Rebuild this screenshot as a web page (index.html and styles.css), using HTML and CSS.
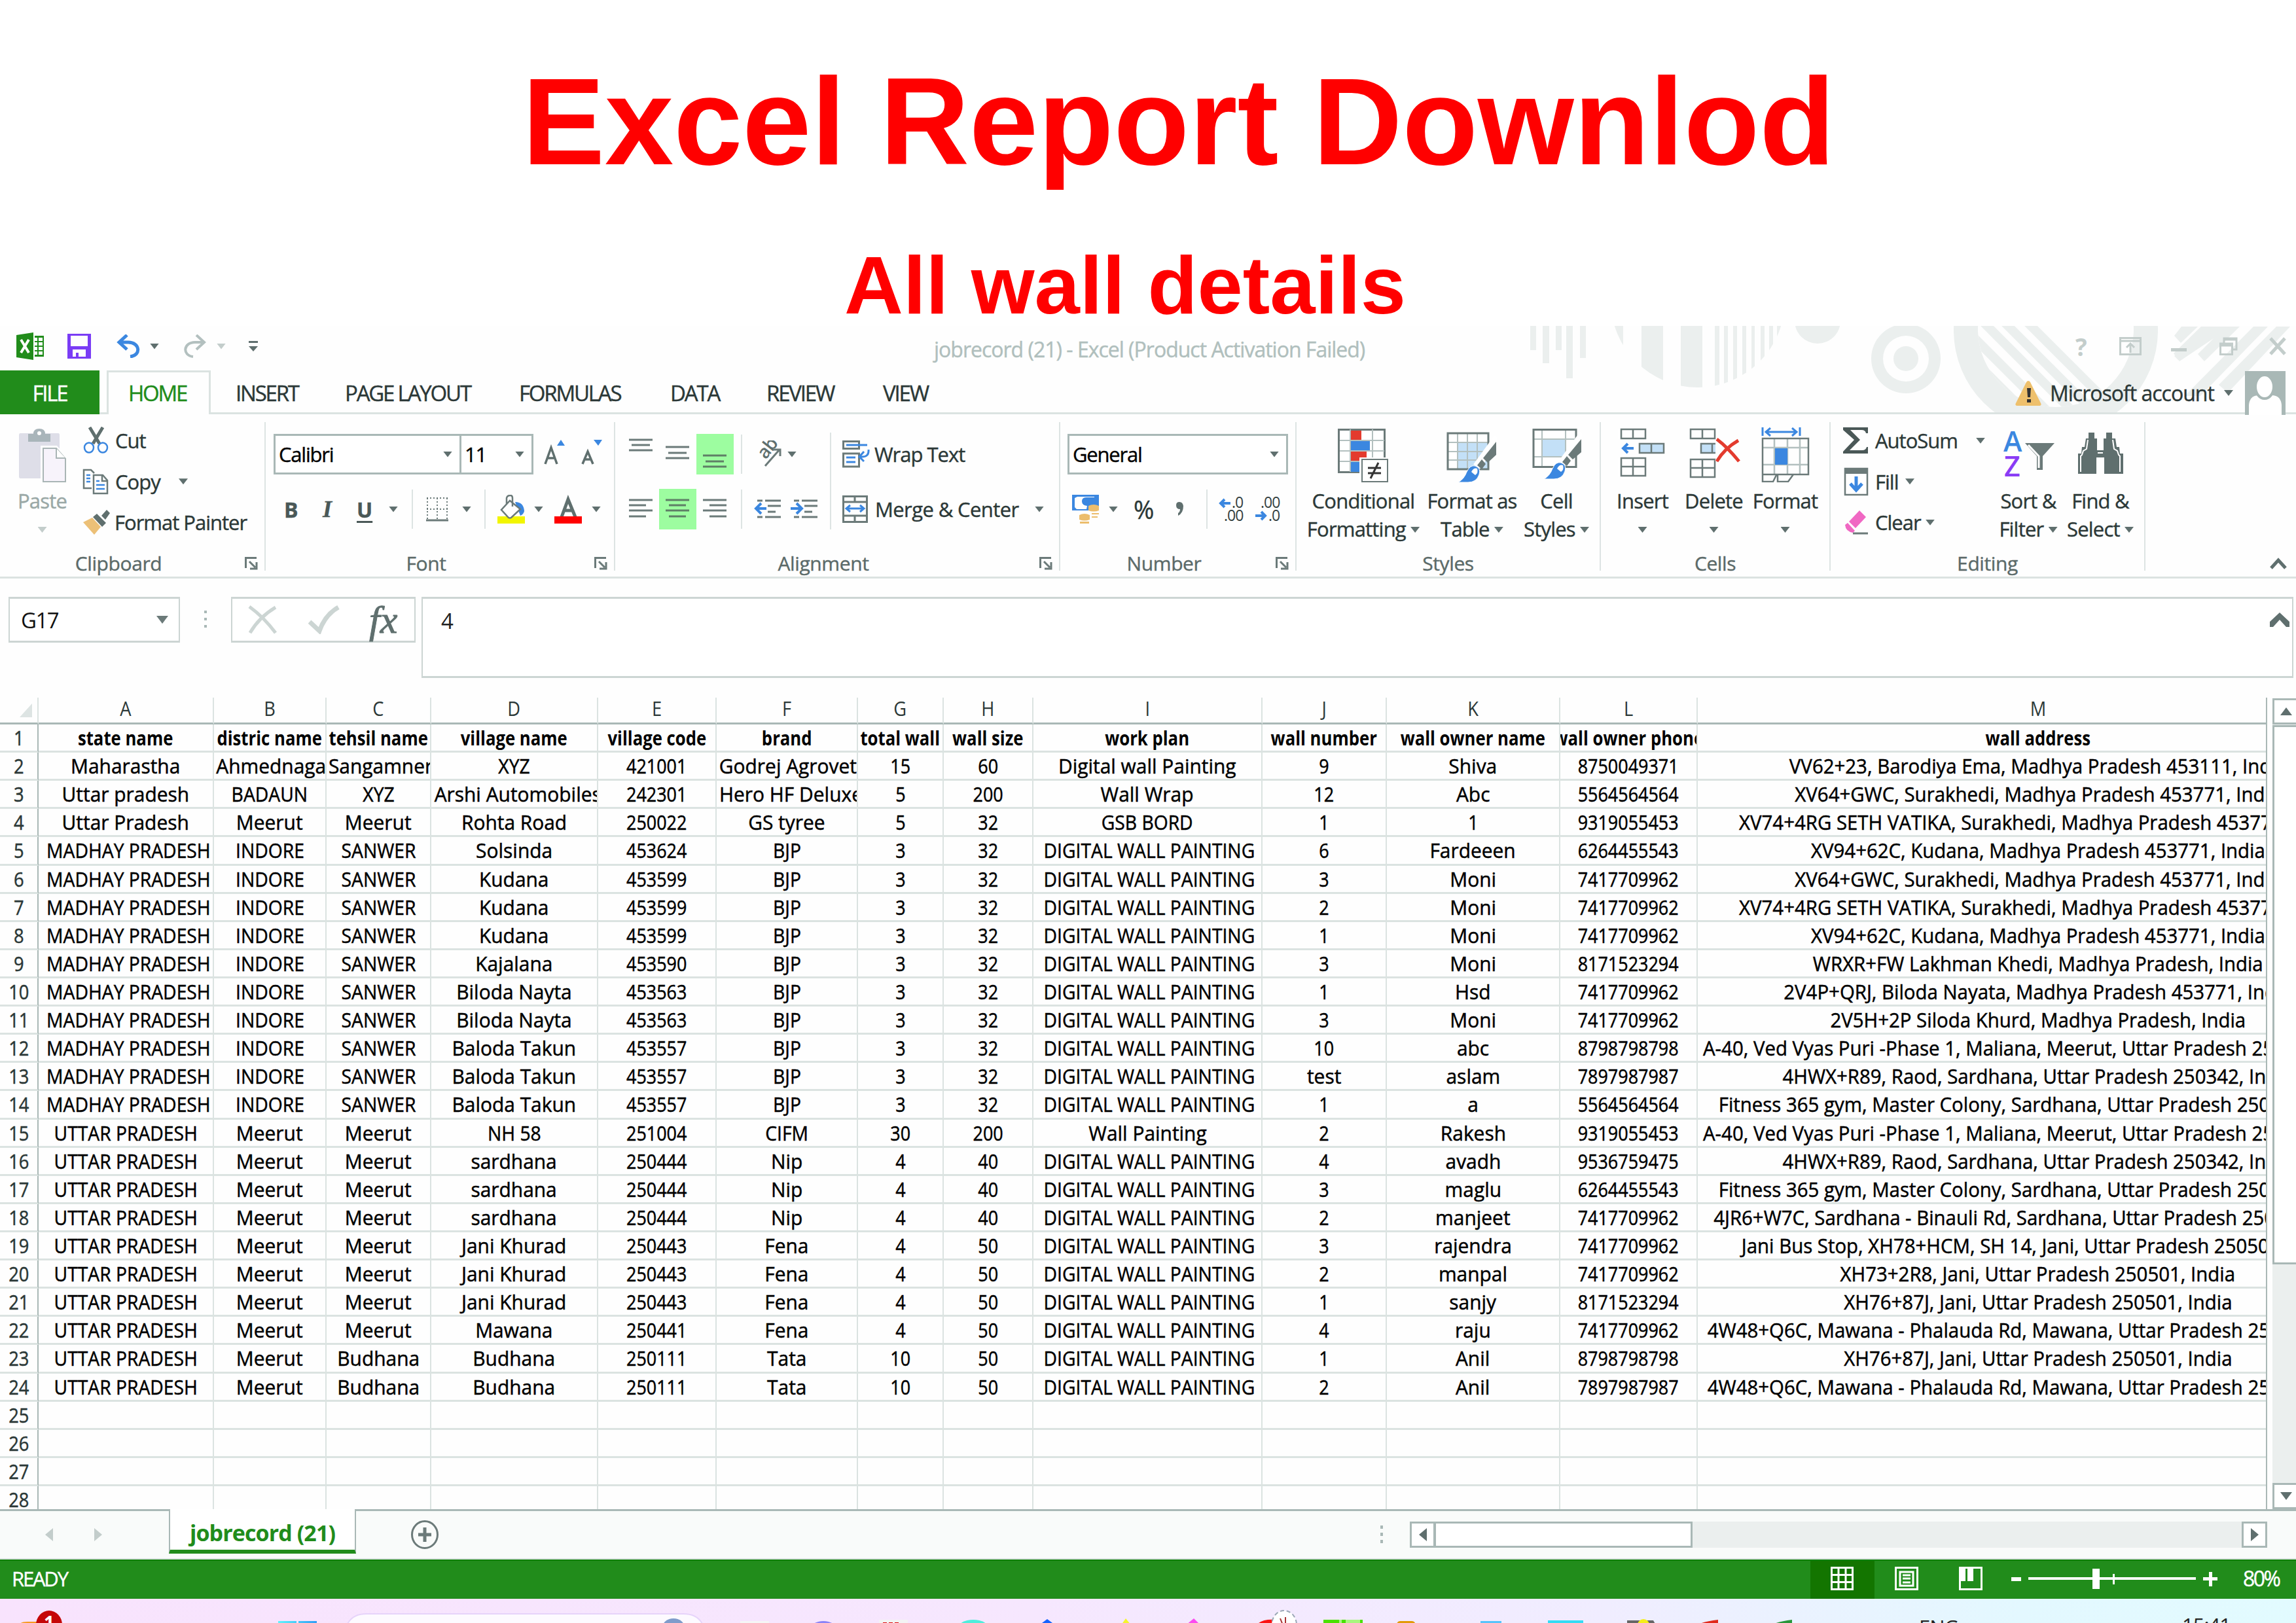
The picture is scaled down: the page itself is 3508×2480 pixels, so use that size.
FILE: index.html
```html
<!DOCTYPE html>
<html lang="en">
<head>
<meta charset="UTF-8" />
<meta name="viewport" content="width=device-width, initial-scale=1" />
<title>Excel Report</title>
<link rel="stylesheet" href="styles.css">
</head>
<body>

<header class="heading">
  <h1>Excel Report Downlod</h1>
  <h2>All wall details</h2>
</header>

<div class="window">

  <!-- background doodles -->
  <svg class="doodles" width="1178" height="135" viewBox="2330 498 1178 135">
    <defs>
      <clipPath id="ball"><circle cx="2594" cy="459" r="133"/></clipPath>
      <clipPath id="disc"><circle cx="3141" cy="503" r="119"/></clipPath>
    </defs>
    <g fill="#ebefee">
      <path d="M2338 498h9v37h-9zM2357 498h10v57h-10zM2377 498h9v37h-9zM2393 498h10v80h-10zM2414 498h9v49h-9z"/>
      <g clip-path="url(#ball)">
        <path d="M2460 498h20v100h-20zM2508 498h33v100h-33zM2568 498h33v100h-33zM2620 498h7v100h-7zM2634 498h6v100h-6zM2648 498h6v100h-6zM2662 498h6v100h-6zM2676 498h5v100h-5zM2690 498h6v100h-6zM2703 498h6v100h-6zM2715 498h6v100h-6z"/>
      </g>
      <circle cx="2777" cy="490" r="35"/>
      <path fill-rule="evenodd" d="M2859 548a53 53 0 1 1 106 0a53 53 0 1 1 -106 0zM2877 548a35 35 0 1 0 70 0a35 35 0 1 0 -70 0z"/>
      <circle cx="2912" cy="548" r="19"/>
      <path fill-rule="evenodd" d="M2985 505a156 156 0 1 0 312 0a156 156 0 1 0 -312 0zM3022 503a119 119 0 1 0 238 0a119 119 0 1 0 -238 0z"/>
    </g>
    <g clip-path="url(#disc)" stroke="#ebefee">
      <path stroke-width="14" d="M2980 480l160 160M3018 480l160 160M3050 480l160 160M3085 480l160 160"/>
      <path stroke-width="24" d="M2948 490l160 160"/>
    </g>
    <g fill="#ebefee">
      <path d="M3333 499h25l-26 25-10-11zM3379 499h30l-79 53-8-8 20-22zM3330 552l-9-12 42-41h22zM3368 552l-10-11 42-42h22l-54 53zM3338 605l105-106h22L3362 605zM3404 600l-14-12 88-89h21z"/>
    </g>
  </svg>

  <div class="titlebar">
    <div class="quick">
      <svg width="42" height="42" viewBox="0 0 42 42"><path fill="#218c1b" d="M0 4L26 0v42L0 38zM28 5h14v32H28z"/><path fill="#fff" d="M28 8h4v5h-4zM34 8h6v5h-6zM28 15h4v5h-4zM34 15h6v5h-6zM28 22h4v5h-4zM34 22h6v5h-6zM28 29h4v5h-4zM34 29h6v5h-6z"/><path d="M7 11l12 20M19 11L7 31" stroke="#fff" stroke-width="4"/></svg>
      <svg width="36" height="38" viewBox="0 0 36 38"><path fill="#7a3cf5" fill-rule="evenodd" d="M0 0h36v38H0zM5 3v16h26V3zM8 24v11h5v-6h4v6h11V24z"/></svg>
      <svg width="36" height="36" viewBox="0 0 36 36" fill="none" stroke="#3b87e0" stroke-width="5"><path d="M16 1L4 12l12 11M4 12h14c18 0 20 20 3 22"/></svg>
      <i class="caret"></i>
      <svg width="36" height="36" viewBox="0 0 36 36" fill="none" stroke="#b3c0bf" stroke-width="4"><path d="M20 1l12 11-12 11M32 12H18C0 12-2 32 15 34"/></svg>
      <i class="caret pale"></i>
      <svg width="14" height="18" viewBox="0 0 14 18" fill="#5f6f6e"><path d="M0 1h14v3H0zM0 9h14l-7 8z"/></svg>
    </div>
    <div class="doc-title">jobrecord (21) - Excel (Product Activation Failed)</div>
    <div class="win-buttons">
      <span class="help">?</span>
      <svg width="34" height="28" viewBox="0 0 34 28" fill="none" stroke="#c3cdcb" stroke-width="3"><path d="M1.500 1.500h31v25h-31zM1 6h32M17 24V11M11 16l6-6 6 6"/></svg>
      <svg width="24" height="28" viewBox="0 0 24 28"><path fill="#c3cdcb" d="M0 17h24v5H0z"/></svg>
      <svg width="28" height="28" viewBox="0 0 28 28" fill="none" stroke="#c3cdcb" stroke-width="3"><path d="M1.500 10h18v16.500h-18zM1.500 13h18M7 9V2h19v17h-6M7 4h19"/></svg>
      <svg width="26" height="28" viewBox="0 0 26 28"><path d="M2 2l22 24M24 2L2 26" stroke="#c3cdcb" stroke-width="5"/></svg>
    </div>
  </div>

  <nav class="tabs">
    <span class="tab file">FILE</span>
    <span class="tab active">HOME</span>
    <span class="tab insert">INSERT</span>
    <span class="tab layout">PAGE LAYOUT</span>
    <span class="tab formulas">FORMULAS</span>
    <span class="tab data">DATA</span>
    <span class="tab review">REVIEW</span>
    <span class="tab">VIEW</span>
    <div class="account">
      <svg width="40" height="38" viewBox="0 0 40 38"><path fill="#eec06c" d="M20 0q2 0 3 2l16 32q2 4-3 4H4q-5 0-3-4L17 2q1-2 3-2z"/><path fill="#333" d="M18 11h6l-1 14h-4zM18 28h6v5h-6z"/></svg>
      <span>Microsoft account</span>
      <i class="caret"></i>
      <svg width="62" height="67" viewBox="0 0 62 67"><path fill="#a9b8b6" d="M0 0h62v67H0z"/><path fill="#fff" d="M6 67V52q1-14 14-15h22q13 1 14 15v15z"/><ellipse cx="30" cy="24" rx="14" ry="18" fill="#fff" stroke="#a9b8b6" stroke-width="4"/></svg>
    </div>
  </nav>

  <section class="ribbon">

    <div class="group clipboard">
      <div class="body">
        <div class="big paste">
          <svg width="72" height="84" viewBox="0 0 72 84"><path fill="#dedee8" d="M2 9h58q2 0 2 3v66H2q-2 0-2-3V12q0-3 2-3z"/><path fill="#a9b5ba" d="M14 10h8q0-8 9-8t9 8h8v12H14z"/><circle cx="31" cy="9" r="3" fill="#fff"/><path fill="#fff" d="M33 28h25l14 16v40H33z"/><path fill="#f7f3fb" stroke="#a9b5b5" stroke-width="2" d="M37 32h20l14 16v35H37z"/><path fill="#fff" stroke="#a9b5b5" stroke-width="2" d="M57 32v15h14"/></svg>
          <b>Paste</b>
          <b><i class="caret pale"></i></b>
        </div>
        <div class="list">
          <div class="line">
            <svg width="40" height="42" viewBox="0 0 40 42" fill="none"><path stroke="#5f6f6e" stroke-width="5" d="M11 1l15 25M31 1L16 26"/><ellipse cx="10" cy="32" rx="7" ry="7.500" stroke="#3b87e0" stroke-width="2.500"/><ellipse cx="31" cy="32" rx="7" ry="7.500" stroke="#3b87e0" stroke-width="2.500"/></svg>
            <span>Cut</span>
          </div>
          <div class="line">
            <svg width="40" height="40" viewBox="0 0 40 40" fill="none" stroke="#6b7a79" stroke-width="2.500"><path d="M14 30H2V2h11l5 5"/><path d="M17 10h14l7 8v20H17z" fill="#fff"/><path d="M30 10v9h8"/><path stroke="#3b87e0" d="M6 10h6M6 15h6M6 20h6M21 19h5M21 25h13M21 31h13"/></svg>
            <span class="copy">Copy</span><i class="caret"></i>
          </div>
          <div class="line">
            <svg width="42" height="38" viewBox="0 0 42 38"><path fill="#ecc077" d="M1 19l14-7 13 14-10 12z"/><path fill="#5f6f6e" d="M16 11l6-5 14 14-6 6zM29 9l8-9 5 5-7 10z"/></svg>
            <span>Format Painter</span>
          </div>
        </div>
      </div>
      <div class="label"><span>Clipboard</span><svg class="launch" viewBox="0 0 20 20"><path d="M1.500 17V1.500H18M7 7l9 9M18 8v10H8" fill="none" stroke="#6b7a79" stroke-width="3"/></svg></div>
    </div>

    <div class="group font">
      <div class="body rows">
        <div class="row1">
          <div class="combo name"><span>Calibri</span><i class="caret"></i></div>
          <div class="combo size"><span>11</span><i class="caret"></i></div>
          <svg class="grow" width="34" height="38" viewBox="0 0 34 38"><path fill="#3b87e0" d="M20 9l6-9 6 9z"/><path d="M2 37L11 12 20 37M5 28h12" fill="none" stroke="#5f6f6e" stroke-width="3.500"/></svg>
          <svg class="shrink" width="34" height="38" viewBox="0 0 34 38"><path fill="#3b87e0" d="M19 0h13l-6 9z"/><path d="M2 37L10 18 18 37M5 30h10" fill="none" stroke="#5f6f6e" stroke-width="3.500"/></svg>
        </div>
        <div class="row2">
          <span class="fmt">B</span>
          <span class="fmt it">I</span>
          <span class="fmt un">U</span>
          <i class="caret"></i>
          <i class="sep"></i>
          <svg width="34" height="38" viewBox="0 0 34 38" fill="none" stroke="#6b7a79" stroke-width="2"><path stroke-dasharray="2 3" d="M1 2h32M1 19h32M2 2v32M17 2v32M32 2v32"/><path stroke-width="3" d="M0 36h34"/></svg>
          <i class="caret"></i>
          <i class="sep"></i>
          <svg width="42" height="44" viewBox="0 0 42 44"><path fill="#f2f500" d="M0 33h42v11H0z"/><path fill="#3b87e0" d="M27 11q13 0 14 14-1 5-6 7z"/><path fill="#fff" stroke="#6b7a79" stroke-width="2.500" d="M19 9l16 13-14 13q-2 1-4 0L6 23zM14 14V5q1-4 6-4 3 0 3 4v13"/></svg>
          <i class="caret"></i>
          <svg width="42" height="44" viewBox="0 0 42 44"><path d="M11 34L21 7l11 27M14 24h14" fill="none" stroke="#5f6f6e" stroke-width="5"/><path fill="#f00" d="M0 33h42v11H0z"/></svg>
          <i class="caret"></i>
        </div>
      </div>
      <div class="label"><span>Font</span><svg class="launch" viewBox="0 0 20 20"><path d="M1.500 17V1.500H18M7 7l9 9M18 8v10H8" fill="none" stroke="#6b7a79" stroke-width="3"/></svg></div>
    </div>

    <div class="group align">
      <div class="body">
        <div class="rows">
          <div class="row1">
            <svg width="57" height="62" viewBox="0 0 57 62"><path d="M10 9h36M14 17h28M10 25h36" stroke="#6b7a79" stroke-width="3"/></svg>
            <svg width="57" height="62" viewBox="0 0 57 62"><path d="M10 20h36M14 29h28M10 37h36" stroke="#6b7a79" stroke-width="3"/></svg>
            <svg class="on" width="57" height="62" viewBox="0 0 57 62"><path d="M10 33h36M14 42h28M10 50h36" stroke="#5f7f66" stroke-width="3"/></svg>
            <i class="sep"></i>
            <svg width="42" height="42" viewBox="0 0 42 42"><text x="0" y="0" transform="translate(18 30) rotate(-52)" class="ab">ab</text><path d="M17 39L39 14M29 14h11v10" fill="none" stroke="#6b7a79" stroke-width="3"/></svg>
            <i class="caret"></i>
          </div>
          <div class="row2">
            <svg width="57" height="62" viewBox="0 0 57 62"><path d="M10 17h36M10 25h26M10 33h36M10 42h26" stroke="#6b7a79" stroke-width="3"/></svg>
            <svg class="on" width="57" height="62" viewBox="0 0 57 62"><path d="M10 17h36M15 25h26M10 33h36M15 42h26" stroke="#5f7f66" stroke-width="3"/></svg>
            <svg width="57" height="62" viewBox="0 0 57 62"><path d="M10 17h36M20 25h26M10 33h36M20 42h26" stroke="#6b7a79" stroke-width="3"/></svg>
            <i class="sep"></i>
            <svg width="42" height="30" viewBox="0 0 42 30"><path d="M5 2h8M17 2h24M21 10h20M21 19h12M5 27h8M17 27h24" stroke="#6b7a79" stroke-width="3"/><path d="M19 14H3M11 6l-8 8 8 8" fill="none" stroke="#3b87e0" stroke-width="4"/></svg>
            <svg width="42" height="30" viewBox="0 0 42 30"><path d="M5 2h8M17 2h24M21 10h20M21 19h12M5 27h8M17 27h24" stroke="#6b7a79" stroke-width="3"/><path d="M0 14h16M9 6l8 8-8 8" fill="none" stroke="#3b87e0" stroke-width="4"/></svg>
          </div>
        </div>
        <div class="wrap">
          <div class="line tall">
            <svg width="42" height="42" viewBox="0 0 42 42" fill="none" stroke="#6b7a79" stroke-width="3"><path d="M1.500 1.500h24v11h-24zM1.500 20h24v20h-24z"/><path stroke="#3b87e0" d="M6 7h32M6 26h14M6 33h14M40 14q1 12-12 11M33 17l-7 8 7 7"/></svg>
            <span>Wrap Text</span>
          </div>
          <div class="line tall">
            <svg width="40" height="42" viewBox="0 0 40 42" fill="none" stroke="#6b7a79" stroke-width="3"><path d="M1.500 1.500h36v39h-36zM1.500 10h36M1.500 31h36M19 1v9M19 31v9"/><path stroke="#3b87e0" d="M7 20h25M12 15l-6 5 6 5M27 15l6 5-6 5"/></svg>
            <span class="merge">Merge &amp; Center</span><i class="caret"></i>
          </div>
        </div>
      </div>
      <div class="label"><span>Alignment</span><svg class="launch" viewBox="0 0 20 20"><path d="M1.500 17V1.500H18M7 7l9 9M18 8v10H8" fill="none" stroke="#6b7a79" stroke-width="3"/></svg></div>
    </div>

    <div class="group number">
      <div class="body rows">
        <div class="row1">
          <div class="combo general"><span>General</span><i class="caret"></i></div>
        </div>
        <div class="row2">
          <svg width="42" height="44" viewBox="0 0 42 44"><path fill="#3b87e0" fill-rule="evenodd" d="M0 0h41v24H0zM4 5v14l3 3h15l1-5q-8-1-8-7t7-6h12V3H8z"/><circle cx="21" cy="11" r="5" fill="#3b87e0"/><path fill="#ecbd6c" d="M25 17q8-4 16 0v7q-8 3-16 0zM11 31q8-4 16 0v7q-8 3-16 0zM30 28h11v2H30zM30 33h9v2h-9zM12 41h14v3H12z"/></svg>
          <i class="caret"></i>
          <span class="pct">%</span>
          <svg width="14" height="24" viewBox="0 0 14 24"><path fill="#5f6f6e" d="M1 6q0-5 5-5t6 6q0 11-8 15v-4q3-2 3-6-6 0-6-6z"/></svg>
          <i class="sep"></i>
          <svg width="40" height="40" viewBox="0 0 40 40"><path d="M18 11H3M9 5l-6 6 6 6" fill="none" stroke="#3b87e0" stroke-width="4"/><text class="dec" x="20" y="18">.0</text><text class="dec" x="8" y="38">.00</text></svg>
          <svg width="40" height="40" viewBox="0 0 40 40"><path d="M0 30h15M9 24l6 6-6 6" fill="none" stroke="#3b87e0" stroke-width="4"/><text class="dec" x="8" y="18">.00</text><text class="dec" x="20" y="38">.0</text></svg>
        </div>
      </div>
      <div class="label"><span>Number</span><svg class="launch" viewBox="0 0 20 20"><path d="M1.500 17V1.500H18M7 7l9 9M18 8v10H8" fill="none" stroke="#6b7a79" stroke-width="3"/></svg></div>
    </div>

    <div class="group styles">
      <div class="body">
        <div class="big cond">
          <svg width="78" height="84" viewBox="0 0 78 84"><path d="M1.500 3.500h70v65h-70z" fill="#fff" stroke="#6b7a79" stroke-width="3"/><path d="M19 3v65M53 3v65M3 20h68M3 36h68M3 52h68" stroke="#b3c0bf" stroke-width="2"/><path fill="#e33b2e" d="M20 5h16v14H20zM20 37h24v14H20z"/><path fill="#3b87e0" d="M20 21h29v14H20zM20 53h14v15H20z"/><path fill="#fff" d="M33 46h45v38H33z"/><path fill="#fff" stroke="#6b7a79" stroke-width="2" d="M37 49h39v34H37z"/><path d="M46 62h20M46 70h20M62 54L50 78" stroke="#333" stroke-width="3"/></svg>
          <b>Conditional</b>
          <b>Formatting <i class="caret"></i></b>
        </div>
        <div class="big format-table">
          <svg width="78" height="84" viewBox="0 0 78 84"><path fill="#fff" d="M2 9h62v55H2z"/><path fill="#c3e0f7" d="M17 24h46v39H17z"/><path d="M17 9v55M32 9v55M47 9v55M2 23h62M2 37h62M2 50h62" stroke="#b3c0bf" stroke-width="2"/><path d="M2 9h62v55H2z" fill="none" stroke="#6b7a79" stroke-width="3"/><path d="M78 16L46 60" stroke="#fff" stroke-width="12"/><path fill="#6b7a79" d="M76 22v20L63 54l-7-7zM54 49l6 7-6 8-7-6z"/><path fill="#3b87e0" stroke="#fff" stroke-width="1" d="M18 84q9-5 13-16 5-11 13-9 9 3 6 13-4 12-17 12z"/><path fill="#fff" d="M38 68q4-7 9-5 2 7-3 10-4-3-6-5z"/></svg>
          <b>Format as</b>
          <b>Table <i class="caret"></i></b>
        </div>
        <div class="big cell-styles">
          <svg width="78" height="84" viewBox="0 0 78 84"><path fill="#fff" d="M4 4h66v57H4z"/><path fill="#c3e0f7" d="M18 19h35v25H18z"/><path d="M17 4v57M53 4v57M4 18h66M4 45h66" stroke="#b3c0bf" stroke-width="2"/><path d="M4 3.500h65v57H4z" fill="none" stroke="#6b7a79" stroke-width="3"/><path d="M80 10L48 54" stroke="#fff" stroke-width="12"/><path fill="#6b7a79" d="M77 18v20L64 49l-7-7zM55 44l6 7-6 8-7-6z"/><path fill="#3b87e0" stroke="#fff" stroke-width="1" d="M20 79q9-5 13-16 5-11 13-9 9 3 6 13-4 12-17 12z"/><path fill="#fff" d="M40 63q4-7 9-5 2 7-3 10-4-3-6-5z"/></svg>
          <b>Cell</b>
          <b>Styles <i class="caret"></i></b>
        </div>
      </div>
      <div class="label"><span>Styles</span></div>
    </div>

    <div class="group cells">
      <div class="body">
        <div class="big">
          <svg width="70" height="84" viewBox="0 0 70 84" fill="none" stroke="#6b7a79" stroke-width="2.500"><path d="M2 3h37v14H2zM20 3v14M2 47h37v27H2zM20 47v27M2 60h37"/><path fill="#c3e0f7" d="M30 25h37v14H30zM48 25v14"/><path stroke="#3b87e0" stroke-width="4" d="M21 32H5M12 25l-7 7 7 7"/></svg>
          <b>Insert</b>
          <b><i class="caret"></i></b>
        </div>
        <div class="big">
          <svg width="80" height="84" viewBox="0 0 80 84" fill="none" stroke="#6b7a79" stroke-width="2.500"><path d="M4 3h37v14H4zM22 3v14M4 49h37v27H4zM22 49v27M4 62h37"/><path fill="#c3e0f7" d="M42 25H20v14h22M37 25v14"/><path stroke="#fff" stroke-width="8" d="M44 19l34 34M77 20L44 53"/><path stroke="#e33b2e" stroke-width="5" d="M44 18q16 12 34 34M77 20Q56 32 44 52"/></svg>
          <b>Delete</b>
          <b><i class="caret"></i></b>
        </div>
        <div class="big">
          <svg width="74" height="84" viewBox="0 0 74 84" fill="none" stroke="#6b7a79" stroke-width="2.500"><path stroke="#b3c0bf" d="M20 17v54M40 17v54M59 17v54M2 31h70M2 57h70"/><path fill="#3b87e0" stroke="none" d="M21 32h19v25H21z"/><path d="M2 17h70v55H2zM2 72v11h16l5-10M25 73v10h16l8-11"/><path stroke="#3b87e0" stroke-width="3" d="M2 0v13M59 0v13M7 7h47M14 1L7 7l7 6M47 1l7 6-7 6"/></svg>
          <b>Format</b>
          <b><i class="caret"></i></b>
        </div>
      </div>
      <div class="label"><span>Cells</span></div>
    </div>

    <div class="group editing">
      <div class="body">
        <div class="list">
          <div class="line">
            <svg width="40" height="42" viewBox="0 0 40 42"><path fill="#4a5857" d="M1 1h38v9h-3q-1-5-7-5H12l15 15-16 16h19q6 0 7-5h2v10H1v-3l17-18L1 5z"/></svg>
            <span class="auto">AutoSum</span><i class="caret"></i>
          </div>
          <div class="line">
            <svg width="40" height="44" viewBox="0 0 40 44"><path d="M4 2h34v40H4z" fill="#fff" stroke="#6b7a79" stroke-width="2.500"/><path fill="#6b7a79" d="M3 1h36v9H3z"/><path d="M21 14v20M12 25l9 10 9-10" fill="none" stroke="#3b87e0" stroke-width="5"/></svg>
            <span class="fill">Fill</span><i class="caret"></i>
          </div>
          <div class="line">
            <svg width="40" height="38" viewBox="0 0 40 38"><path fill="#f068c3" d="M26 1l10 10-16 17-10-10zM8 20l11 12-3 3q-11-2-12-12z"/><path d="M16 36h23" stroke="#6b7a79" stroke-width="3"/></svg>
            <span class="clear">Clear</span><i class="caret"></i>
          </div>
        </div>
        <div class="big">
          <svg width="82" height="84" viewBox="0 0 82 84"><text class="az" x="3" y="37" fill="#3b87e0">A</text><text class="az" x="4" y="75" fill="#8a3cf5">Z</text><path fill="#6b7a79" d="M36 24h45L63 44v21H54V44z"/><path d="M41 27l16 17v18" fill="none" stroke="#fff" stroke-width="3"/></svg>
          <b>Sort &amp;</b>
          <b>Filter <i class="caret"></i></b>
        </div>
        <div class="big">
          <svg width="70" height="84" viewBox="0 0 70 84"><path fill="#5f6f6e" d="M17 8h9v9h4v18h10V17h4V8h9v9h5l2 13h4l1 10h5v31H41V46H29v25H1V40h5l1-10h4l2-13h4z"/><path d="M16 19l-2 14-5 3-2 6-2 2v24M54 19l2 14 5 3 2 6 2 2v24M31 39h8" fill="none" stroke="#fff" stroke-width="2"/></svg>
          <b>Find &amp;</b>
          <b>Select <i class="caret"></i></b>
        </div>
      </div>
      <div class="label"><span>Editing</span></div>
    </div>

    <svg class="collapse" width="26" height="18" viewBox="0 0 26 18"><path d="M2 16L13 4l11 12" fill="none" stroke="#5f6f6e" stroke-width="5"/></svg>
  </section>

  <section class="formula-bar">
    <div class="box name-box"><span>G17</span><svg width="18" height="12" viewBox="0 0 18 12"><path fill="#6b7a79" d="M0 0h18L9 12z"/></svg></div>
    <svg class="dots" width="6" height="30" viewBox="0 0 6 30"><path fill="#a9b8b6" d="M1 1h4v4H1zM1 12h4v4H1zM1 23h4v4H1z"/></svg>
    <div class="box fx-box">
      <svg width="46" height="44" viewBox="0 0 46 44"><path d="M3 2q22 16 40 40M43 3Q18 18 4 42" fill="none" stroke="#ccd5d3" stroke-width="5"/></svg>
      <svg width="48" height="44" viewBox="0 0 48 44"><path d="M2 25l15 14Q26 14 46 3" fill="none" stroke="#ccd5d3" stroke-width="7"/></svg>
      <span class="fx">fx</span>
    </div>
    <div class="box input">
      <span>4</span>
      <svg width="30" height="22" viewBox="0 0 30 22"><path fill="#5f6f6e" d="M15 0l15 14v8h-5L15 11 5 22H0v-8z"/></svg>
    </div>
  </section>

  <section class="sheet-area">
    <div class="sheet" id="sheet"></div>
    <div class="vscroll">
      <div class="btn up"><svg width="18" height="12" viewBox="0 0 18 12"><path fill="#5f6f6e" d="M0 12L9 0l9 12z"/></svg></div>
      <div class="thumb"></div>
      <div class="btn down"><svg width="18" height="12" viewBox="0 0 18 12"><path fill="#5f6f6e" d="M0 0h18L9 12z"/></svg></div>
    </div>
  </section>

  <section class="sheet-tabs">
    <svg class="prev" width="12" height="20" viewBox="0 0 12 20"><path fill="#c3cdcb" d="M12 0v20L0 10z"/></svg>
    <svg class="next" width="12" height="20" viewBox="0 0 12 20"><path fill="#c3cdcb" d="M0 0v20l12-10z"/></svg>
    <div class="sheet-tab">jobrecord (21)</div>
    <svg class="add" width="44" height="46" viewBox="0 0 44 46" fill="none" stroke="#6b7a79"><ellipse cx="22" cy="23" rx="19.500" ry="20.500" stroke-width="3"/><path stroke-width="5" d="M22 12v22M12 23h20"/></svg>
    <svg class="dots" width="6" height="30" viewBox="0 0 6 30"><path fill="#a9b8b6" d="M1 1h4v5H1zM1 12h4v5H1zM1 23h4v5H1z"/></svg>
    <div class="hscroll">
      <div class="btn"><svg width="12" height="20" viewBox="0 0 12 20"><path fill="#5f6f6e" d="M12 0v20L0 10z"/></svg></div>
      <div class="thumb"></div>
      <div class="btn right"><svg width="12" height="20" viewBox="0 0 12 20"><path fill="#5f6f6e" d="M0 0v20l12-10z"/></svg></div>
    </div>
  </section>

  <footer class="status">
    <span class="ready">READY</span>
    <div class="view on"><svg width="36" height="36" viewBox="0 0 36 36"><path fill="none" stroke="#fff" stroke-width="3" d="M1.500 1.500h32v33h-32zM12 1v34M23 1v34M1 12.500h33M1 23.500h33"/></svg></div>
    <div class="view"><svg width="36" height="36" viewBox="0 0 36 36"><path fill="none" stroke="#fff" stroke-width="3" d="M1.500 1.500h33v33h-33zM8 8h20v21H8zM12 13h12M12 18h12M12 24h12"/></svg></div>
    <div class="view"><svg width="36" height="36" viewBox="0 0 36 36"><path fill="none" stroke="#fff" stroke-width="3" d="M1.500 1.500h33v33h-33z"/><path fill="#fff" d="M2 2h8v20H2zM13 2h9v20h-9z"/></svg></div>
    <svg class="zoom" width="320" height="40" viewBox="0 0 320 40"><path fill="#fff" d="M2 18h15v6H2zM28 18h256v4H28zM126 5h11v31h-11zM157 13h3v16h-3zM295 18h22v5h-22zM304 10h5v22h-5z"/></svg>
    <span class="percent">80%</span>
  </footer>

  <footer class="taskbar">
    <svg width="3508" height="40" viewBox="0 0 3508 40">
      <defs><linearGradient id="win" x1="0" x2="1"><stop offset="0" stop-color="#5ff4fb"/><stop offset="1" stop-color="#2f9df5"/></linearGradient></defs>
      <path fill="#f79a1f" d="M30 40q0-5 12-5h20v5z"/>
      <ellipse cx="75" cy="40" rx="20" ry="22" fill="#c50606"/>
      <path fill="url(#win)" d="M425 34h28v6h-28zM456 34h28v6h-28z"/>
      <path fill="#fdfaff" stroke="#e6d3fa" stroke-width="2" d="M530 40q8-17 30-17h484q22 0 30 17z"/>
      <ellipse cx="1029" cy="44" rx="17" ry="14" fill="#7f9ccb"/>
      <path fill="#f5f5f5" d="M1131 34h44v6h-44z"/>
      <ellipse cx="1258" cy="46" rx="20" ry="12" fill="#8a83f7"/>
      <path fill="#f3f3f3" d="M1343 32h44v8h-44z"/><path fill="#dd1111" d="M1349 36h6v4h-6zM1358 36h6v4h-6zM1367 36h6v4h-6z"/>
      <ellipse cx="1487" cy="46" rx="24" ry="14" fill="#4deedb"/>
      <path fill="#1463ff" d="M1588 40l12-9 12 9z"/>
      <path fill="#f5f52c" d="M1713 40l7-10 8 10z"/>
      <path fill="#fb4bf0" d="M1812 40l12-10 10 10z"/>
      <path fill="#fb1313" d="M1920 40q8-10 30-8v8z"/>
      <ellipse cx="1962" cy="40" rx="19" ry="22" fill="#fff" stroke="#9aa7b5" stroke-width="2" stroke-dasharray="6 4"/>
      <path d="M1956 30l4 10M1964 28v12" stroke="#a33" stroke-width="2"/>
      <path fill="#4be100" d="M2022 32h60v8h-60z"/><path fill="#a8f77e" d="M2046 32h4v8h-4zM2056 32h22v8h-22z"/>
      <path fill="#e29a06" d="M2133 40q2-6 6-6h18q5 0 6 6z"/>
      <path fill="#56c3fb" d="M2262 34h32v6h-32z"/>
      <path fill="#33dcf4" d="M2365 33h54v7h-54z"/><path fill="#10305e" d="M2370 37h44v3h-44z"/>
      <path fill="#666" d="M2486 33h40l4 7h-44z"/><circle cx="2511" cy="40" r="9" fill="#f5ee1a"/>
      <path fill="#e0291b" d="M2592 40q10-5 33-8v8z"/>
      <path fill="#27963a" d="M2706 40q10-5 32-8v8z"/>
    </svg>
    <span class="badge">1</span>
    <span class="lang">ENG</span>
    <span class="clock">15:41</span>
  </footer>

</div>

<script>
  const columns = ['A','B','C','D','E','F','G','H','I','J','K','L','M'];

  const MP = 'MADHAY PRADESH', UP = 'UTTAR PRADESH', DWP = 'DIGITAL WALL PAINTING';

  const rows = [
    ['state name','distric name','tehsil name','village name','village code','brand','total wall','wall size','work plan','wall number','wall owner name','wall owner phone','wall address'],
    ['Maharastha','Ahmednagar','Sangamner','XYZ','421001','Godrej Agrovet','15','60','Digital wall Painting','9','Shiva','8750049371','VV62+23, Barodiya Ema, Madhya Pradesh 453111, India'],
    ['Uttar pradesh','BADAUN','XYZ','Arshi Automobiles','242301','Hero HF Deluxe','5','200','Wall Wrap','12','Abc','5564564564','XV64+GWC, Surakhedi, Madhya Pradesh 453771, India'],
    ['Uttar Pradesh','Meerut','Meerut','Rohta Road','250022','GS tyree','5','32','GSB BORD','1','1','9319055453','XV74+4RG SETH VATIKA, Surakhedi, Madhya Pradesh 453771, India'],
    [MP,'INDORE','SANWER','Solsinda','453624','BJP','3','32',DWP,'6','Fardeeen','6264455543','XV94+62C, Kudana, Madhya Pradesh 453771, India'],
    [MP,'INDORE','SANWER','Kudana','453599','BJP','3','32',DWP,'3','Moni','7417709962','XV64+GWC, Surakhedi, Madhya Pradesh 453771, India'],
    [MP,'INDORE','SANWER','Kudana','453599','BJP','3','32',DWP,'2','Moni','7417709962','XV74+4RG SETH VATIKA, Surakhedi, Madhya Pradesh 453771, India'],
    [MP,'INDORE','SANWER','Kudana','453599','BJP','3','32',DWP,'1','Moni','7417709962','XV94+62C, Kudana, Madhya Pradesh 453771, India'],
    [MP,'INDORE','SANWER','Kajalana','453590','BJP','3','32',DWP,'3','Moni','8171523294','WRXR+FW Lakhman Khedi, Madhya Pradesh, India'],
    [MP,'INDORE','SANWER','Biloda Nayta','453563','BJP','3','32',DWP,'1','Hsd','7417709962','2V4P+QRJ, Biloda Nayata, Madhya Pradesh 453771, India'],
    [MP,'INDORE','SANWER','Biloda Nayta','453563','BJP','3','32',DWP,'3','Moni','7417709962','2V5H+2P Siloda Khurd, Madhya Pradesh, India'],
    [MP,'INDORE','SANWER','Baloda Takun','453557','BJP','3','32',DWP,'10','abc','8798798798','A-40, Ved Vyas Puri -Phase 1, Maliana, Meerut, Uttar Pradesh 250001, India'],
    [MP,'INDORE','SANWER','Baloda Takun','453557','BJP','3','32',DWP,'test','aslam','7897987987','4HWX+R89, Raod, Sardhana, Uttar Pradesh 250342, India'],
    [MP,'INDORE','SANWER','Baloda Takun','453557','BJP','3','32',DWP,'1','a','5564564564','Fitness 365 gym, Master Colony, Sardhana, Uttar Pradesh 250342, India'],
    [UP,'Meerut','Meerut','NH 58','251004','CIFM','30','200','Wall Painting','2','Rakesh','9319055453','A-40, Ved Vyas Puri -Phase 1, Maliana, Meerut, Uttar Pradesh 250001, India'],
    [UP,'Meerut','Meerut','sardhana','250444','Nip','4','40',DWP,'4','avadh','9536759475','4HWX+R89, Raod, Sardhana, Uttar Pradesh 250342, India'],
    [UP,'Meerut','Meerut','sardhana','250444','Nip','4','40',DWP,'3','maglu','6264455543','Fitness 365 gym, Master Colony, Sardhana, Uttar Pradesh 250342, India'],
    [UP,'Meerut','Meerut','sardhana','250444','Nip','4','40',DWP,'2','manjeet','7417709962','4JR6+W7C, Sardhana - Binauli Rd, Sardhana, Uttar Pradesh 250342, India'],
    [UP,'Meerut','Meerut','Jani Khurad','250443','Fena','4','50',DWP,'3','rajendra','7417709962','Jani Bus Stop, XH78+HCM, SH 14, Jani, Uttar Pradesh 250501, India'],
    [UP,'Meerut','Meerut','Jani Khurad','250443','Fena','4','50',DWP,'2','manpal','7417709962','XH73+2R8, Jani, Uttar Pradesh 250501, India'],
    [UP,'Meerut','Meerut','Jani Khurad','250443','Fena','4','50',DWP,'1','sanjy','8171523294','XH76+87J, Jani, Uttar Pradesh 250501, India'],
    [UP,'Meerut','Meerut','Mawana','250441','Fena','4','50',DWP,'4','raju','7417709962','4W48+Q6C, Mawana - Phalauda Rd, Mawana, Uttar Pradesh 250401, India'],
    [UP,'Meerut','Budhana','Budhana','250111','Tata','10','50',DWP,'1','Anil','8798798798','XH76+87J, Jani, Uttar Pradesh 250501, India'],
    [UP,'Meerut','Budhana','Budhana','250111','Tata','10','50',DWP,'2','Anil','7897987987','4W48+Q6C, Mawana - Phalauda Rd, Mawana, Uttar Pradesh 250401, India']
  ];

  // digits and capitals are set narrower than mixed text
  function cellClass(text, r, c) {
    if (r === 0) return 'cell head';
    if (c === 12) return 'cell addr';
    if (/^[0-9]+$/.test(text)) return 'cell num';
    if (/^[A-Z0-9 ]+$/.test(text)) return 'cell caps';
    return 'cell';
  }

  let html = '<div class="corner"><i></i></div>';
  columns.forEach(c => html += `<div class="col"><span>${c}</span></div>`);
  for (let r = 0; r < 28; r++) {
    html += `<div class="row-no"><span>${r + 1}</span></div>`;
    for (let c = 0; c < 13; c++) {
      const text = rows[r] ? rows[r][c] : '';
      html += `<div class="${cellClass(text, r, c)}"><span>${text}</span></div>`;
    }
  }
  document.getElementById('sheet').innerHTML = html;
</script>

</body>
</html>
```
FILE: styles.css
```css
* {
  box-sizing: border-box;
}
body {
  margin: 0;
  width: 3508px;
  height: 2480px;
  overflow: hidden;
  background: #fff;
  color: #2b3837;
  font-family: "Open Sans", "Noto Sans", sans-serif;
  font-size: 31px;
  white-space: nowrap;
}
svg {
  display: block;
  flex: none;
}
.heading {
  height: 498px;
  color: #f00;
  font-family: "Liberation Sans", Arial, sans-serif;
}
.heading h1, .heading h2 {
  margin: 0;
  font-weight: bold;
}
.heading h1 {
  padding: 76px 0 0 798px;
  font-size: 189px;
  line-height: 220px;
}
.heading h2 {
  padding: 68px 0 0 1290px;
  font-size: 124.500px;
  line-height: 144px;
}
.window {
  position: relative;
  height: 1982px;
  background: #fefefe;
}
.doodles {
  position: absolute;
  left: 2330px;
  top: 0;
}

/* carets and separators */
.caret {
  display: inline-block;
  width: 14px;
  height: 9px;
  background: #5f6f6e;
  clip-path: polygon(0 0, 100% 0, 50% 100%);
}
.caret.pale {
  background: #c3cdcb;
}
.sep {
  width: 2px;
  height: 60px;
  background: #dde4e3;
}

/* title bar */
.titlebar {
  position: relative;
  height: 68px;
  display: flex;
  align-items: flex-start;
}
.quick {
  height: 62px;
  padding-left: 25px;
  display: grid;
  grid-template-columns: 78px 75px 51px 51px 51px 49px 14px;
  align-items: center;
}
.doc-title {
  margin-left: 1033px;
  width: 1744px;
  line-height: 72px;
  font-size: 32px;
  letter-spacing: -1px;
  color: #b0bfbd;
  -webkit-text-stroke: 0.4px #b0bfbd;
}
.win-buttons {
  height: 62px;
  display: grid;
  grid-template-columns: 67px 79px 74px 76px 26px;
  align-items: center;
}
.help {
  font-size: 37px;
  font-weight: bold;
  color: #c3cdcb;
}

/* ribbon tabs */
.tabs {
  position: relative;
  height: 67px;
  display: flex;
  border-bottom: 3px solid #dbe3e1;
  font-size: 33px;
  line-height: 69px;
}
.tab {
  letter-spacing: -2.2px;
  -webkit-text-stroke: 0.4px;
}
.file {
  width: 152px;
  height: 67px;
  margin-right: 11px;
  background: #218c1b;
  color: #fff;
  text-align: center;
}
.tab.active {
  width: 159px;
  height: 67px;
  margin-right: 38px;
  padding-right: 4px;
  border: 3px solid #dbe3e1;
  border-bottom: 0;
  background: #fefefe;
  color: #218c1b;
  text-align: center;
  line-height: 64px;
}
.insert { width: 167px; }
.layout { width: 266px; }
.formulas { width: 231px; }
.data { width: 147px; }
.review { width: 178px; }
.account {
  height: 66px;
  margin-left: auto;
  padding-right: 16px;
  display: grid;
  grid-template-columns: 53px 266px 32px 62px;
  align-items: center;
  font-size: 32px;
  letter-spacing: -1px;
  -webkit-text-stroke: 0.4px;
}

/* ribbon */
.ribbon {
  position: relative;
  height: 251px;
  display: flex;
  border-bottom: 3px solid #dbe3e1;
  -webkit-text-stroke: 0.4px;
}
.group {
  display: flex;
  flex-direction: column;
  position: relative;
  border-right: 2px solid #dde4e3;
  height: 227px;
  margin-top: 12px;
}
.clipboard { width: 406px; }
.font { width: 534px; }
.align { width: 680px; }
.number { width: 361px; }
.styles { width: 465px; }
.cells { width: 351px; }
.editing { width: 481px; }
.body {
  display: flex;
  flex: none;
  height: 196px;
}
.label {
  display: flex;
  flex: none;
  height: 40px;
  line-height: 40px;
  align-items: center;
  color: #5b6a69;
  font-size: 30px;
  letter-spacing: -0.4px;
}
.label span {
  flex: 1;
  text-align: center;
}
.launch {
  width: 20px;
  height: 20px;
  margin: 0 10px 0 12px;
}
.big {
  display: flex;
  flex-direction: column;
  align-items: center;
  padding-top: 8px;
  letter-spacing: -0.8px;
}
.big svg {
  margin-bottom: 7px;
}
.big b {
  font-weight: normal;
  line-height: 43px;
}
.big .caret {
  vertical-align: 6px;
}
.paste {
  width: 126px;
  padding-left: 3px;
  color: #9aa8a6;
}
.list {
  margin-top: -3px;
}
.line {
  height: 62.500px;
  display: flex;
  align-items: center;
  letter-spacing: -1px;
}
.line svg {
  margin-right: 10px;
}
.line svg[width="42"] {
  margin-right: 7px;
}
.list .copy { width: 97px; }
.list .auto { width: 154px; }
.list .fill { width: 46px; }
.list .clear { width: 77px; }
.rows {
  flex-direction: column;
  padding-top: 18px;
}
.row1 {
  height: 62px;
  margin-bottom: 22px;
  align-items: center;
}
.row2 {
  height: 62px;
  align-items: center;
}
.combo {
  height: 62px;
  padding: 0 11px 0 5px;
  display: flex;
  align-items: center;
  justify-content: space-between;
  border: 3px solid #a9b8b6;
  background: #fff;
  color: #000;
  letter-spacing: -1.2px;
}
.font .row1 {
  display: flex;
  padding-left: 12px;
}
.combo.name { width: 287px; }
.combo.size {
  width: 113px;
  margin-left: -3px;
}
.grow { margin: -6px 23px 0 16px; }
.shrink { margin-top: -6px; }
.font .row2 {
  display: grid;
  padding-left: 28px;
  grid-template-columns: 59px 52px 49px 35px 22px 55px 34px 20px 56px 31px 57px 14px;
}
.fmt {
  font-weight: bold;
  font-size: 32px;
  color: #4a5857;
}
.it {
  font-style: italic;
  font-family: "Liberation Serif", serif;
  font-size: 36px;
}
.un {
  text-decoration: underline;
  text-decoration-thickness: 3px;
  text-underline-offset: 5px;
}
.align .row1, .align .row2 {
  display: grid;
  padding-left: 11px;
}
.align .row1 {
  grid-template-columns: 56px 57px 68px 20px 51px 65px;
}
.align .row2 {
  grid-template-columns: 56px 57px 68px 20px 56px 60px;
}
.on {
  background: #9dfda0;
}
.ab {
  font-size: 28px;
  font-weight: 600;
  fill: #5f6f6e;
  letter-spacing: -1px;
}
.wrap {
  height: 148px;
  margin-top: 16px;
  padding: 2px 0 0 17px;
  border-left: 2px solid #dde4e3;
}
.line.tall {
  height: 62px;
  margin-bottom: 22px;
}
.merge {
  width: 244px;
  letter-spacing: -0.6px;
}
.number .row1 {
  display: flex;
  padding-left: 11px;
}
.general { width: 337px; }
.number .row2 {
  display: grid;
  padding-left: 18px;
  grid-template-columns: 56px 38px 64px 47px 19px 56px 40px;
}
.pct {
  font-size: 38px;
}
.dec {
  font-size: 23px;
  letter-spacing: -1px;
  fill: #333f3e;
}
.styles .body { padding-left: 13px; }
.cond { width: 178px; }
.format-table { width: 154px; }
.cell-styles { width: 104px; }
.cells .body { padding-left: 9px; }
.cells .big { width: 109px; }
.editing .list {
  width: 248px;
  padding-left: 18px;
}
.editing .big:nth-child(2) { width: 108px; }
.editing .big:nth-child(3) { width: 112px; }
.az {
  font-size: 43px;
  font-weight: 600;
}
.collapse {
  margin: 219px 0 0 190px;
}

/* formula bar */
.formula-bar {
  display: flex;
  height: 182px;
  padding: 28px 0 0 13px;
}
.box {
  height: 70px;
  border: 2px solid #ccd5d3;
  border-top-width: 3px;
  border-bottom-width: 3px;
  display: flex;
  align-items: center;
  background: #fff;
}
.name-box {
  width: 262px;
  padding: 0 16px 0 17px;
  justify-content: space-between;
  color: #111;
  letter-spacing: -1.5px;
  font-size: 33px;
}
.formula-bar .dots {
  margin: 20px 36px 0 36px;
}
.fx-box {
  width: 282px;
  padding-left: 23px;
  display: grid;
  grid-template-columns: 93px 93px 60px;
}
.fx {
  font-family: "Liberation Serif", serif;
  font-style: italic;
  font-size: 60px;
  line-height: 60px;
  color: #5f6f6e;
  -webkit-text-stroke: 1px #5f6f6e;
}
.input {
  width: 2860px;
  height: 124px;
  margin-left: 9px;
  padding: 0 4px 0 28px;
  align-items: flex-start;
  justify-content: space-between;
  font-size: 33px;
  line-height: 68px;
  color: #222;
}
.input svg {
  margin-top: 21px;
}

/* sheet */
.sheet-area {
  display: flex;
  height: 1243px;
  border-bottom: 3px solid #a9b8b6;
}
.sheet {
  width: 3464px;
  height: 1240px;
  overflow: hidden;
  display: grid;
  grid-template-columns: 59px 268px 172px 160px 255px 181px 216px 131px 137px 350px 190px 265px 210px 1041px;
  grid-template-rows: 41px;
  grid-auto-rows: 43.110px;
  font-size: 31px;
  line-height: 41px;
  border-right: 2px solid #a9b8b6;
  -webkit-text-stroke: 0.5px;
}
.sheet > div {
  overflow: hidden;
  border-right: 2px solid #dbe3e1;
  border-bottom: 3px solid #dbe3e1;
}
.sheet > .corner, .sheet > .col {
  border-bottom: 3px solid #a9b8b6;
  text-align: center;
  line-height: 33px;
}
.sheet > .col {
  -webkit-text-stroke: 0;
}
.corner i {
  display: block;
  width: 19px;
  height: 21px;
  margin: 9px 0 0 30px;
  background: #dde4e3;
  clip-path: polygon(100% 0, 100% 100%, 0 100%);
}
.row-no {
  text-align: center;
}
.sheet > .row-no {
  border-right: 2px solid #a9b8b6;
}
.col span, .row-no span {
  display: inline-block;
  transform: scaleX(0.88);
}
.cell {
  display: flex;
  justify-content: safe center;
  color: #000;
}
.cell span {
  flex: none;
  transform: scaleX(0.965);
}
.cell.num span {
  transform: scaleX(0.868);
}
.cell.caps span {
  transform: scaleX(0.912);
}
.cell.addr, .cell.head {
  justify-content: center;
}
.cell.addr span {
  transform: scaleX(0.948);
}
.cell.head {
  font-weight: bold;
  -webkit-text-stroke: 0;
}
.cell.head span {
  transform: scaleX(0.83);
}
.vscroll {
  width: 36px;
  margin: 1px 0 0 8px;
  display: flex;
  flex-direction: column;
  overflow: hidden;
  background: #ebefee;
}
.btn {
  display: flex;
  align-items: center;
  justify-content: center;
  border: 3px solid #a9b8b6;
  background: #fff;
  flex: none;
}
.vscroll .btn {
  height: 40px;
  width: 50px;
  padding-right: 8px;
}
.vscroll .thumb {
  width: 50px;
  height: 824px;
  margin-top: 1px;
  border: 3px solid #a9b8b6;
  background: #fff;
}
.vscroll .down {
  margin-top: auto;
}

/* sheet tabs */
.sheet-tabs {
  height: 74px;
  display: flex;
  align-items: center;
  background: #f9fbfa;
  border-bottom: 2px solid #dbe3e1;
}
.prev { margin-left: 69px; }
.next { margin-left: 63px; }
.sheet-tab {
  align-self: flex-start;
  width: 286px;
  height: 68px;
  margin: -3px 0 0 102px;
  border: 2px solid #a9b8b6;
  border-top: 0;
  border-bottom: 6px solid #218c1b;
  background: #fff;
  color: #218c1b;
  font-size: 34px;
  font-weight: bold;
  letter-spacing: -0.9px;
  line-height: 72px;
  text-align: center;
  z-index: 1;
}
.add { margin-left: 83px; }
.sheet-tabs .dots { margin-left: 1437px; }
.hscroll {
  display: flex;
  width: 1310px;
  height: 40px;
  margin-left: 40px;
  background: #ebefee;
}
.hscroll .btn {
  width: 39px;
}
.hscroll .thumb {
  width: 395px;
  margin-left: -2px;
  border: 3px solid #a9b8b6;
  background: #fff;
}
.hscroll .right {
  margin-left: auto;
}

/* status bar */
.status {
  height: 60px;
  display: flex;
  align-items: center;
  background: #218c1b;
  border-top: 2px solid #0d7f06;
  color: #fff;
  -webkit-text-stroke: 0.4px;
}
.ready {
  width: 2748px;
  margin: -4px 0 0 18px;
  font-size: 31px;
  letter-spacing: -2.2px;
}
.view {
  width: 98px;
  height: 58px;
  padding-bottom: 4px;
  display: flex;
  align-items: center;
  justify-content: center;
}
.view.on {
  background: #137500;
}
.zoom { margin: -4px 0 0 11px; }
.percent {
  margin: -5px 0 0 36px;
  font-size: 32px;
  letter-spacing: -2.6px;
}

/* taskbar */
.taskbar {
  position: relative;
  height: 40px;
  overflow: hidden;
  background: linear-gradient(90deg, #f8e3fd 0, #f6e7fe 45%, #f0edff 70%, #e3f8ff 88%, #e2fbff 100%);
}
.badge, .lang, .clock {
  position: absolute;
  line-height: 30px;
  color: #222;
}
.badge {
  left: 67px;
  top: 21px;
  color: #fff;
  font-size: 28px;
  font-weight: bold;
}
.lang {
  left: 2932px;
  top: 28px;
  letter-spacing: -1px;
}
.clock {
  left: 3334px;
  top: 25px;
  letter-spacing: -1px;
}
```
